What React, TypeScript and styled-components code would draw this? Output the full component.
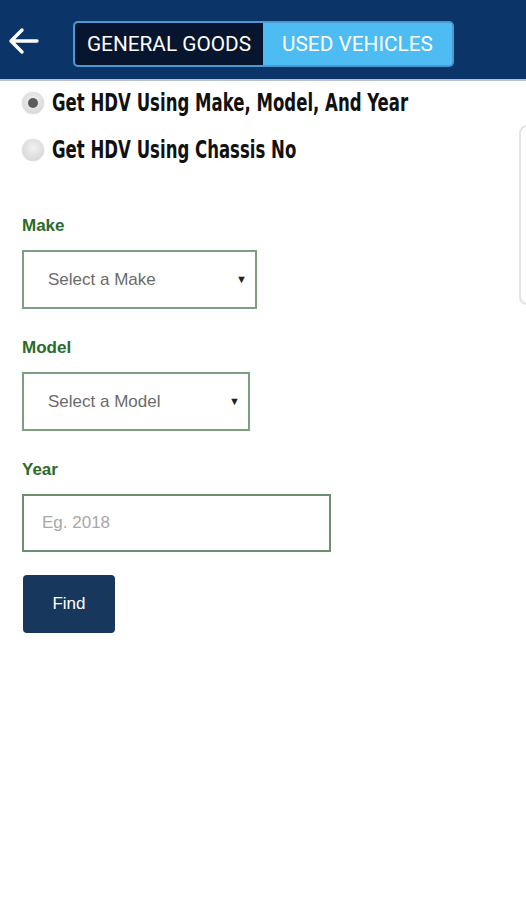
import React, { useState } from 'react';
import styled, { createGlobalStyle } from 'styled-components';

const GlobalStyle = createGlobalStyle`
  html, body {
    margin: 0;
    padding: 0;
    background: #fff;
    font-family: Roboto, 'Liberation Sans', Arial, sans-serif;
  }
  * {
    box-sizing: border-box;
  }
`;

const fields = [
  { key: 'make', label: 'Make', placeholder: 'Select a Make', width: 235 },
  { key: 'model', label: 'Model', placeholder: 'Select a Model', width: 228 }
];

function App() {
  const [tab, setTab] = useState('used');
  const [mode, setMode] = useState('mmy');

  return (
    <Page>
      <GlobalStyle />
      <Header>
        <BackButton aria-label='back'>
          <svg width='32' height='28' viewBox='0 0 32 28' fill='none'>
            <path
              d='M29 14H4M14 3L3 14l11 11'
              stroke='#fff'
              strokeWidth='3.4'
              strokeLinecap='round'
              strokeLinejoin='round'
            />
          </svg>
        </BackButton>
        <Segment>
          <SegmentButton
            active={tab === 'general'}
            dark
            onClick={() => setTab('general')}
          >
            GENERAL GOODS
          </SegmentButton>
          <SegmentButton active={tab === 'used'} onClick={() => setTab('used')}>
            USED VEHICLES
          </SegmentButton>
        </Segment>
      </Header>
      <Body>
        <Content>
          <RadioRow onClick={() => setMode('mmy')}>
            <RadioDot checked={mode === 'mmy'} />
            <RadioLabel>Get HDV Using Make, Model, And Year</RadioLabel>
          </RadioRow>
          <RadioRow onClick={() => setMode('chassis')}>
            <RadioDot checked={mode === 'chassis'} />
            <RadioLabel>Get HDV Using Chassis No</RadioLabel>
          </RadioRow>

          <Form>
            {fields.map((f) => (
              <Field key={f.key}>
                <FieldLabel>{f.label}</FieldLabel>
                <SelectBox width={f.width}>
                  <SelectText>{f.placeholder}</SelectText>
                  <Caret>▼</Caret>
                </SelectBox>
              </Field>
            ))}
            <Field>
              <FieldLabel>Year</FieldLabel>
              <YearInput placeholder='Eg. 2018' />
            </Field>
            <FindButton>Find</FindButton>
          </Form>
        </Content>
        <SidePanel />
      </Body>
    </Page>
  );
}
export default App;

const Page = styled.div`
  width: 526px;
  min-height: 900px;
  background: #fff;
  overflow: hidden;
`;

const Header = styled.header`
  display: flex;
  align-items: center;
  height: 81px;
  padding: 0 0 0 6px;
  background-color: #0b3469;
  border-bottom: 2px solid #b9c3d0;
`;

const BackButton = styled.button`
  display: flex;
  align-items: center;
  justify-content: center;
  width: 36px;
  height: 40px;
  margin-top: 2px;
  padding: 0;
  background: none;
  border: none;
`;

const Segment = styled.div`
  display: flex;
  margin-left: 31px;
  margin-top: 8px;
  width: 381px;
  height: 46px;
  border: 2px solid #4d97d3;
  border-radius: 5px;
  overflow: hidden;
  background-color: #4cbcf2;
`;

const SegmentButton = styled.button<{ active: boolean; dark?: boolean }>`
  display: flex;
  align-items: center;
  justify-content: center;
  width: ${(props) => (props.dark ? '188px' : '189px')};
  height: 100%;
  padding: 0;
  border: none;
  background-color: ${(props) => (props.dark ? '#07162e' : '#4cbcf2')};
  color: #fff;
  font-family: Roboto, 'Liberation Sans', sans-serif;
  font-size: 20.8px;
  font-weight: 400;
  opacity: ${(props) => (props.active || props.dark ? 1 : 0.9)};
`;

const Body = styled.div`
  display: flex;
  overflow: hidden;
`;

const Content = styled.main`
  flex: 0 0 519px;
  padding: 8px 0 0 22px;
`;

const SidePanel = styled.aside`
  flex: 0 0 120px;
  height: 180px;
  margin-top: 44px;
  border: 2px solid #e3e3e3;
  border-radius: 8px;
`;

const RadioRow = styled.label`
  display: flex;
  align-items: center;
  height: 28px;
  margin-bottom: 19px;
  cursor: pointer;
`;

const RadioDot = styled.span<{ checked: boolean }>`
  position: relative;
  flex: 0 0 22px;
  width: 22px;
  height: 22px;
  margin-right: 8px;
  border-radius: 50%;
  background: radial-gradient(circle at 50% 40%, #f2f2f2 0%, #dadada 70%, #cfcfcf 100%);
  box-shadow: 0 0 1px rgba(0, 0, 0, 0.25);
  &::after {
    content: '';
    display: ${(props) => (props.checked ? 'block' : 'none')};
    position: absolute;
    left: 6px;
    top: 6px;
    width: 10px;
    height: 10px;
    border-radius: 50%;
    background: #5c5c5c;
  }
`;

const RadioLabel = styled.span`
  display: inline-block;
  color: #111;
  font-family: 'DejaVu Sans Condensed', 'Liberation Sans', sans-serif;
  font-size: 23px;
  font-weight: 700;
  white-space: nowrap;
  transform: scale(0.8, 1.04);
  transform-origin: left center;
`;

const Form = styled.div`
  display: flex;
  flex-direction: column;
  padding-top: 33px;
`;

const Field = styled.div`
  display: flex;
  flex-direction: column;
  margin-bottom: 29px;
`;

const FieldLabel = styled.div`
  margin-bottom: 14px;
  color: #2b6a2b;
  font-family: 'Liberation Sans', Arial, sans-serif;
  font-size: 17px;
  font-weight: 700;
  line-height: 20px;
`;

const SelectBox = styled.div<{ width: number }>`
  display: flex;
  align-items: center;
  justify-content: space-between;
  width: ${(props) => props.width}px;
  height: 59px;
  padding: 0 8px 0 24px;
  border: 2px solid #7e9e80;
  background: #fff;
`;

const SelectText = styled.span`
  color: #6b6b6b;
  font-family: 'Liberation Sans', Arial, sans-serif;
  font-size: 17px;
`;

const Caret = styled.span`
  color: #222;
  font-size: 11px;
`;

const YearInput = styled.input`
  width: 309px;
  height: 58px;
  padding: 0 18px;
  border: 2px solid #6e8e70;
  border-radius: 0;
  outline: none;
  font-family: 'Liberation Sans', Arial, sans-serif;
  font-size: 17px;
  color: #333;
  &::placeholder {
    color: #a8a8a8;
  }
`;

const FindButton = styled.button`
  width: 92px;
  height: 58px;
  margin-top: -6px;
  margin-left: 1px;
  border: none;
  border-radius: 4px;
  background-color: #18375c;
  color: #fff;
  font-family: 'Liberation Sans', Arial, sans-serif;
  font-size: 17px;
  cursor: pointer;
`;
